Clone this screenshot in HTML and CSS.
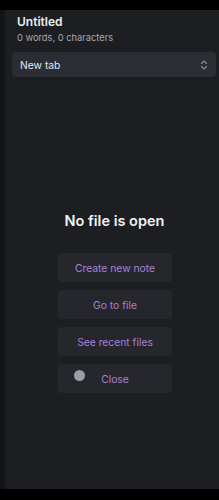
FILE: index.html
```html
<!DOCTYPE html>
<html>
<head>
<meta charset="utf-8">
<link rel="stylesheet" href="styles.css">
</head>
<body>
<div class="topbar"></div>
<div class="app">
  <div class="rail"></div>
  <div class="main">
    <div class="header">
      <div class="title">Untitled</div>
      <div class="stats">0 words, 0 characters</div>
    </div>
    <div class="select">
      <span>New tab</span>
      <svg class="chev" width="8" height="10" viewBox="0 0 8 10"><path d="M1.5 3.5 L4 1 L6.5 3.5 M1.5 6.5 L4 9 L6.5 6.5" fill="none" stroke="#8a8d96" stroke-width="1.1" stroke-linecap="round" stroke-linejoin="round"/></svg>
    </div>
    <div class="empty">
      <div class="empty-title">No file is open</div>
      <div class="actions">
        <div class="btn">Create new note</div>
        <div class="btn">Go to file</div>
        <div class="btn">See recent files</div>
        <div class="btn close"><span class="dot"></span>Close</div>
      </div>
    </div>
  </div>
</div>
<div class="bottombar"></div>
</body>
</html>
```

FILE: styles.css
```css
html, body {
  margin: 0;
  padding: 0;
  background: #000;
  height: 500px;
  overflow: hidden;
}
body {
  font-family: Inter, "Noto Sans", sans-serif;
  display: flex;
  flex-direction: column;
}
.topbar {
  height: 10px;
  flex: none;
  background: #000;
}
.bottombar {
  height: 11px;
  flex: none;
  background: #000;
}
.app {
  display: flex;
  flex: 1;
  background: #1c1e22;
}
.rail {
  width: 5px;
  background: #121416;
  flex: none;
}
.main {
  flex: 1;
  display: flex;
  flex-direction: column;
}
.header {
  padding: 4px 0 0 12px;
}
.title {
  color: #eceef2;
  font-size: 12px;
  font-weight: 600;
  line-height: 16px;
}
.stats {
  color: #a7a9b0;
  font-size: 9.3px;
  line-height: 13px;
  margin-top: 1px;
}
.select {
  margin: 8px 3px 0 7px;
  height: 25px;
  background: #2b2d35;
  border-radius: 4px;
  display: flex;
  align-items: center;
  justify-content: space-between;
  padding: 0 8px 0 8px;
  color: #e4e6ea;
  font-size: 10.3px;
}
.chev {
  display: block;
}
.empty {
  display: flex;
  flex-direction: column;
  align-items: center;
  margin-top: 134px;
}
.empty-title {
  color: #f1f2f5;
  font-size: 14.5px;
  font-weight: 600;
  line-height: 20px;
  margin-left: 5px;
}
.actions {
  margin-top: 22px;
  margin-left: 6px;
  display: flex;
  flex-direction: column;
  gap: 8px;
}
.btn {
  width: 114px;
  height: 29px;
  box-sizing: border-box;
  background: #26272d;
  border-radius: 4px;
  color: #a881d6;
  font-size: 10.3px;
  display: flex;
  align-items: center;
  justify-content: center;
  position: relative;
}
.dot {
  position: absolute;
  left: 16px;
  top: 6px;
  width: 11px;
  height: 11px;
  border-radius: 50%;
  background: #9c9ca3;
}
```
